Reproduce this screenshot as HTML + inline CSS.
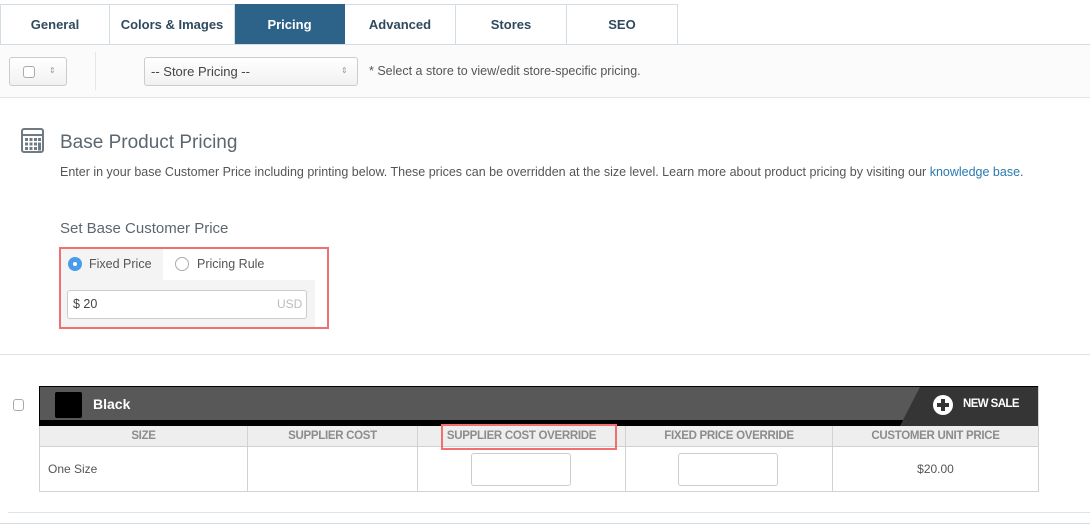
<!DOCTYPE html>
<html><head><style>
*{box-sizing:border-box;margin:0;padding:0}
body{width:1090px;height:524px;background:#fff;font-family:"Liberation Sans",sans-serif;position:relative;overflow:hidden;color:#555}
.a{position:absolute}
.tab{position:absolute;top:4px;height:41px;border:1px solid #d5dde4;border-bottom:none;border-left:none;font-size:13px;font-weight:bold;color:#2f4a5f;text-align:center;line-height:40px}
.th{position:absolute;top:426px;height:21px;background:#eee;border-right:1px solid #d2d2d2;font-size:11.5px;font-weight:bold;color:#8c8c8c;text-align:center;line-height:21px;letter-spacing:-0.3px}
.td{position:absolute;top:447px;height:45px;border-right:1px solid #d2d2d2;border-bottom:1px solid #d2d2d2;font-size:12px;color:#555;line-height:44px}
.inp{position:absolute;border:1px solid #ccc;border-radius:3px;background:#fff}
</style></head><body>
<div class="a" style="left:0;top:4px;width:1px;height:41px;background:#d5dde4"></div>
<div class="tab" style="left:0;width:110px;border-left:1px solid #d5dde4">General</div>
<div class="tab" style="left:110px;width:125px">Colors &amp; Images</div>
<div class="tab" style="left:235px;width:110px;background:#2e6389;color:#fff;border-color:#2e6389">Pricing</div>
<div class="tab" style="left:345px;width:111px">Advanced</div>
<div class="tab" style="left:456px;width:111px">Stores</div>
<div class="tab" style="left:567px;width:111px">SEO</div>
<div class="a" style="left:0;top:44px;width:1090px;height:1px;background:#d5dde4"></div>
<div class="a" style="left:0;top:97px;width:1090px;height:1px;background:#e3e6e8"></div>
<div class="a" style="left:0;top:45px;width:1090px;height:52px;background:#fbfbfb"></div>
<div class="inp" style="left:9px;top:57px;width:58px;height:29px;background:linear-gradient(#fff,#f1f1f1)"></div>
<div class="a" style="left:23px;top:66px;width:12px;height:12px;border:1px solid #aaa;border-radius:3px;background:#fff"></div>
<div class="a" style="left:49px;top:66px;font-size:8px;color:#999">&#8661;</div>
<div class="a" style="left:95px;top:52px;width:1px;height:38px;background:#e6e6e6"></div>
<div class="inp" style="left:144px;top:57px;width:214px;height:29px;background:linear-gradient(#fff,#f1f1f1);font-size:13px;color:#444;padding-left:6px;line-height:27px">-- Store Pricing --</div>
<div class="a" style="left:341px;top:66px;font-size:8px;color:#999">&#8661;</div>
<div class="a" style="left:369px;top:64px;font-size:12.5px;color:#555">* Select a store to view/edit store-specific pricing.</div>
<svg class="a" style="left:21px;top:128px" width="23" height="25" viewBox="0 0 23 25"><rect x="1" y="1" width="21" height="23" rx="2" fill="none" stroke="#6f7a82" stroke-width="2"/><rect x="1" y="6" width="21" height="2" fill="#6f7a82"/><g fill="#6f7a82"><rect x="4" y="10" width="3" height="3"/><rect x="8.5" y="10" width="3" height="3"/><rect x="13" y="10" width="3" height="3"/><rect x="17" y="10" width="3" height="3"/><rect x="4" y="14.5" width="3" height="3"/><rect x="8.5" y="14.5" width="3" height="3"/><rect x="13" y="14.5" width="3" height="3"/><rect x="17" y="14.5" width="3" height="8"/><rect x="4" y="19" width="3" height="3"/><rect x="8.5" y="19" width="3" height="3"/><rect x="13" y="19" width="3" height="3"/></g></svg>
<div class="a" style="left:60px;top:132px;font-size:19px;color:#5b6770">Base Product Pricing</div>
<div class="a" style="left:60px;top:165px;font-size:12.5px;color:#555">Enter in your base Customer Price including printing below. These prices can be overridden at the size level. Learn more about product pricing by visiting our <span style="color:#2a7ab0">knowledge base</span>.</div>
<div class="a" style="left:60px;top:220px;font-size:15px;color:#5b6770">Set Base Customer Price</div>
<div class="a" style="left:60px;top:248px;width:103px;height:33px;background:#f4f4f4"></div>
<div class="a" style="left:60px;top:280px;width:255px;height:47px;background:#f4f4f4"></div>
<div class="a" style="left:59px;top:247px;width:270px;height:82px;border:2px solid #f07070"></div>
<div class="a" style="left:68px;top:257px;width:14px;height:14px;border-radius:50%;background:#4a9ce8"></div>
<div class="a" style="left:73px;top:262px;width:4px;height:4px;border-radius:50%;background:#fff"></div>
<div class="a" style="left:89px;top:257px;font-size:12.5px;color:#555">Fixed Price</div>
<div class="a" style="left:175px;top:257px;width:14px;height:14px;border-radius:50%;border:1px solid #aaa;background:#fff"></div>
<div class="a" style="left:197px;top:257px;font-size:12.5px;color:#555">Pricing Rule</div>
<div class="inp" style="left:67px;top:290px;width:240px;height:29px"></div>
<div class="a" style="left:73px;top:297px;font-size:12.5px;color:#444">$ 20</div>
<div class="a" style="left:277px;top:297px;font-size:12px;color:#bbb">USD</div>
<div class="a" style="left:0;top:354px;width:1090px;height:1px;background:#dfe3e6"></div>
<div class="a" style="left:13px;top:399px;width:11px;height:12px;border:1px solid #aaa;border-radius:3px"></div>
<div class="a" style="left:39px;top:386px;width:1000px;height:106px;border:1px solid #d2d2d2"></div>
<div class="a" style="left:39px;top:386px;width:999px;height:40px;background:#000"></div>
<div class="a" style="left:40px;top:387px;width:998px;height:33px;background:#585858"></div>
<svg class="a" style="left:900px;top:387px" width="138" height="39"><polygon points="20,0 138,0 138,39 0,39 3,33" fill="#353535"/></svg>
<div class="a" style="left:55px;top:392px;width:27px;height:26px;background:#000;border-radius:2px"></div>
<div class="a" style="left:93px;top:396px;font-size:14px;font-weight:bold;color:#fff">Black</div>
<div class="a" style="left:933px;top:395px;width:20px;height:20px;border-radius:50%;background:#fff"></div>
<div class="a" style="left:941px;top:399px;width:4px;height:12px;background:#353535"></div>
<div class="a" style="left:937px;top:403px;width:12px;height:4px;background:#353535"></div>
<div class="a" style="left:963px;top:398px;font-size:11.5px;font-weight:bold;color:#fff;letter-spacing:-0.6px">NEW SALE</div>
<div class="th" style="left:40px;width:208px">SIZE</div>
<div class="th" style="left:248px;width:170px">SUPPLIER COST</div>
<div class="th" style="left:418px;width:208px">SUPPLIER COST OVERRIDE</div>
<div class="th" style="left:626px;width:207px">FIXED PRICE OVERRIDE</div>
<div class="th" style="left:833px;width:205px;border-right:none">CUSTOMER UNIT PRICE</div>
<div class="a" style="left:40px;top:446px;width:998px;height:1px;background:#d2d2d2"></div>
<div class="td" style="left:40px;width:208px;padding-left:8px">One Size</div>
<div class="td" style="left:248px;width:170px"></div>
<div class="td" style="left:418px;width:208px"></div>
<div class="td" style="left:626px;width:207px"></div>
<div class="td" style="left:833px;width:205px;border-right:none;text-align:center">$20.00</div>
<div class="inp" style="left:471px;top:453px;width:100px;height:33px"></div>
<div class="inp" style="left:678px;top:453px;width:100px;height:33px"></div>
<div class="a" style="left:441px;top:424px;width:176px;height:26px;border:2px solid #f07070"></div>
<div class="a" style="left:8px;top:512px;width:1082px;height:1px;background:#dfe3e6"></div>
<div class="a" style="left:0;top:523px;width:1090px;height:1px;background:#d5dde4"></div>
</body></html>
